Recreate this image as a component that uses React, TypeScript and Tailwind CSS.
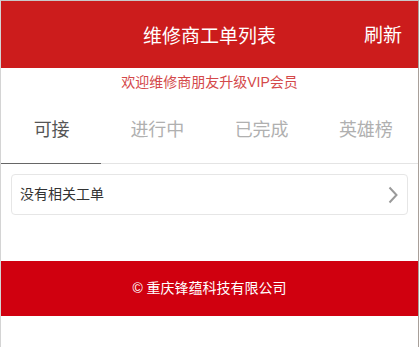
import React from 'react';

const tabs = ['可接', '进行中', '已完成', '英雄榜'];

const App: React.FC = () => {
  const active = 0;

  return (
    <div
      className="w-[419px] h-[347px] bg-white border-t border-l border-r border-t-[#c8c8c8] border-l-[#d4d4d4] border-r-[#a8a09a] overflow-hidden"
      style={{ fontFamily: '"Liberation Sans", "Noto Sans CJK SC", sans-serif' }}
    >
      {/* Header */}
      <div className="relative h-[67px] bg-[#cc1c1c] flex items-center justify-center text-white">
        <span className="text-[19px] leading-none mt-[4px]">维修商工单列表</span>
        <span className="absolute right-[16px] top-[25px] text-[19px] leading-none">刷新</span>
      </div>

      {/* Notice */}
      <div className="h-[29px] flex items-center justify-center text-[14px] text-[#d4494a]">
        欢迎维修商朋友升级VIP会员
      </div>

      {/* Tabs */}
      <div className="flex h-[67px] border-b border-[#e4e4e4]">
        {tabs.map((t, i) => (
          <div key={t} className="relative flex-1 flex items-center justify-center">
            <span className={i === active ? 'text-[18px] text-[#555] -ml-[3px]' : 'text-[18px] text-[#b0b0b0]'}>{t}</span>
            {i === active && (
              <div className="absolute left-0 bottom-[-1px] w-[100px] h-px bg-[#666]" />
            )}
          </div>
        ))}
      </div>

      {/* List */}
      <div className="px-[10px] pt-[10px] h-[97px]">
        <div className="h-[41px] border border-[#e6e6e6] rounded-[4px] flex items-center justify-between pl-[8px] pr-[9px]">
          <span className="text-[14px] text-[#333]">没有相关工单</span>
          <svg width="10" height="18" viewBox="0 0 10 18" fill="none">
            <path d="M1.5 1.5 L8.5 9 L1.5 16.5" stroke="#9a9a9a" strokeWidth="2" />
          </svg>
        </div>
      </div>

      {/* Footer */}
      <div className="h-[55px] bg-[#d0000f] flex items-center justify-center text-white text-[14px]">
        © 重庆锋蕴科技有限公司
      </div>
    </div>
  );
};

export default App;
